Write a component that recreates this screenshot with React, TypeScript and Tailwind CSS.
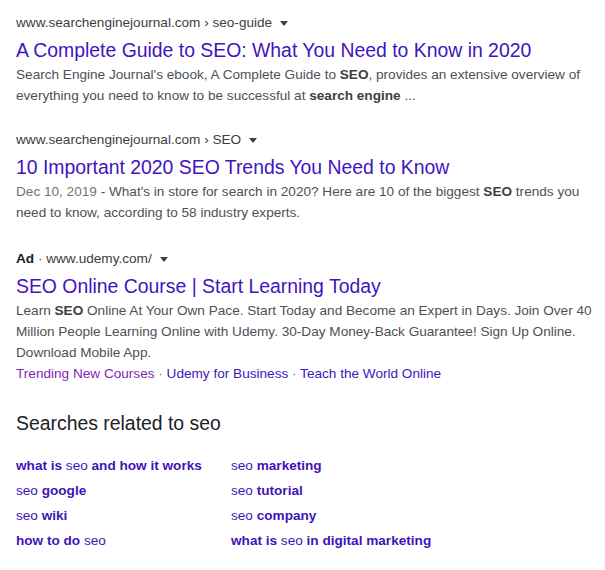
import { ReactNode } from 'react';

const font = { fontFamily: '"Liberation Sans", Arial, sans-serif' };

function Caret() {
  return <span className="ml-2 inline-block h-0 w-0 border-x-[4px] border-t-[5px] border-x-transparent border-t-[#3c4043] align-middle" />;
}

function Result({ url, title, children }: { url: ReactNode; title: string; children: ReactNode }) {
  return (
    <div>
      <div className="flex items-center text-[13.6px] leading-[20px] text-[#3c4043]">
        {url}
        <Caret />
      </div>
      <a className="mt-[4px] block text-[19.4px] leading-[26px] text-[#4214c0]">{title}</a>
      <p className="mt-[1px] text-[13.6px] leading-[21px] text-[#4d5156]">{children}</p>
    </div>
  );
}

const related: [string, boolean][][] = [
  [['what is ', true], ['seo', false], [' and how it works', true]],
  [['seo', false], [' marketing', true]],
  [['seo', false], [' google', true]],
  [['seo', false], [' tutorial', true]],
  [['seo', false], [' wiki', true]],
  [['seo', false], [' company', true]],
  [['how to do', true], [' seo', false]],
  [['what is ', true], ['seo', false], [' in digital marketing', true]],
];

export default function App() {
  return (
    <div className="min-h-[570px] w-[605px] bg-white pl-4 pr-2 pt-[13px]" style={font}>
      <Result url={<span>www.searchenginejournal.com › seo-guide</span>} title="A Complete Guide to SEO: What You Need to Know in 2020">
        Search Engine Journal's ebook, A Complete Guide to <b className="text-[#3c4043]">SEO</b>, provides an extensive overview of everything you need to know to be successful at{' '}
        <b className="text-[#3c4043]">search engine</b> ...
      </Result>

      <div className="mt-[24px]">
        <Result url={<span>www.searchenginejournal.com › SEO</span>} title="10 Important 2020 SEO Trends You Need to Know">
          <span className="text-[#70757a]">Dec 10, 2019</span> - What's in store for search in 2020? Here are 10 of the biggest{' '}
          <b className="text-[#3c4043]">SEO</b> trends you need to know, according to 58 industry experts.
        </Result>
      </div>

      <div className="mt-[26px]">
        <Result
          url={
            <span>
              <b className="text-[#202124]">Ad</b> · www.udemy.com/
            </span>
          }
          title="SEO Online Course | Start Learning Today"
        >
          Learn <b className="text-[#3c4043]">SEO</b> Online At Your Own Pace. Start Today and Become an Expert in Days. Join Over 40 Million People Learning Online with Udemy. 30-Day Money-Back Guarantee! Sign Up Online. Download Mobile App.
        </Result>
        <div className="text-[13.6px] leading-[21px] text-[#4214c0]">
          <span className="text-[#8424b4]">Trending New Courses</span>
          <span className="text-[#70757a]"> · </span>
          <span>Udemy for Business</span>
          <span className="text-[#70757a]"> · </span>
          <span>Teach the World Online</span>
        </div>
      </div>

      <h2 className="mt-[27px] text-[19.4px] leading-[24px] text-[#202124]">Searches related to seo</h2>

      <div className="mt-[21px] grid grid-cols-[215px_1fr] gap-y-[5px] text-[13.6px] leading-[20px] text-[#3e14b8]">
        {related.map((parts, i) => (
          <div key={i}>
            {parts.map(([t, bold], j) => (
              <span key={j} className={bold ? 'font-bold' : ''}>
                {t}
              </span>
            ))}
          </div>
        ))}
      </div>
    </div>
  );
}
